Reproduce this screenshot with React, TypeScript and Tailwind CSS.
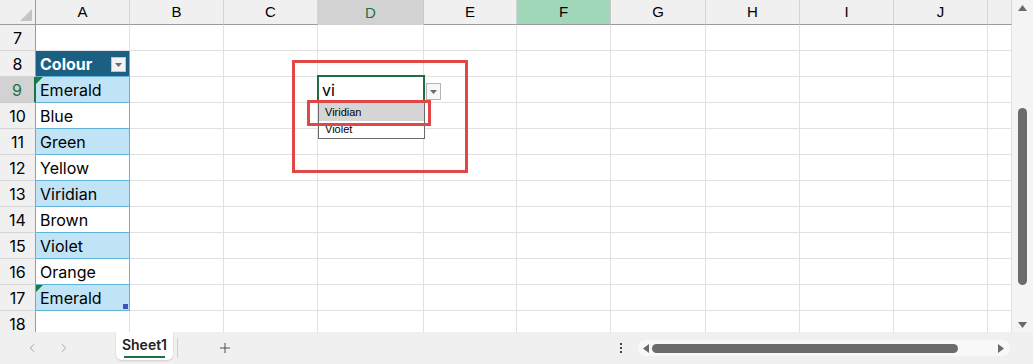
import { ChevronLeft, ChevronRight, Plus } from "lucide-react";

const COLS = ["A", "B", "C", "D", "E", "F", "G", "H", "I", "J", ""];

const ROWS: { n: number; text?: string; kind?: "head" | "band" | "plain"; flag?: boolean; handle?: boolean }[] = [
  { n: 7 },
  { n: 8, text: "Colour", kind: "head" },
  { n: 9, text: "Emerald", kind: "band", flag: true },
  { n: 10, text: "Blue", kind: "plain" },
  { n: 11, text: "Green", kind: "band" },
  { n: 12, text: "Yellow", kind: "plain" },
  { n: 13, text: "Viridian", kind: "band" },
  { n: 14, text: "Brown", kind: "plain" },
  { n: 15, text: "Violet", kind: "band" },
  { n: 16, text: "Orange", kind: "plain" },
  { n: 17, text: "Emerald", kind: "band", flag: true, handle: true },
  { n: 18 },
];

const cellFont = "font-['Inter','Noto_Sans',sans-serif]";

function ColHeader({ label }: { label: string }) {
  if (label === "D") {
    return (
      <div className="flex items-center justify-center bg-[#d2d2d2] border-r border-[#c8c8c8] border-b-2 border-b-[#1e7145] text-[#1e7145] text-[15px] pt-[2px]">
        {label}
      </div>
    );
  }
  if (label === "F") {
    return (
      <div className="flex items-center justify-center bg-[#a0d7b8] border-r border-[#c8c8c8] border-b border-b-[#9b9b9b] text-[15px] pt-[1px]">
        {label}
      </div>
    );
  }
  return (
    <div className="flex items-center justify-center bg-[#f0f0f0] border-r border-[#d4d4d4] border-b border-b-[#9b9b9b] text-[15px] pt-[1px]">
      {label}
    </div>
  );
}

function TableCell({ row }: { row: (typeof ROWS)[number] }) {
  if (!row.kind) {
    return <div className="border-r border-b border-[#e1e1e1] bg-white" />;
  }
  if (row.kind === "head") {
    return (
      <div className="relative flex items-center pl-[4px] bg-[#1b5f82] border-r border-b border-[#5fb2d8] text-white font-bold text-[16px]">
        {row.text}
        <div className="absolute right-[3px] top-[6px] w-[15px] h-[15px] bg-[#f3f3f3] border border-[#c4c4c4] flex items-center justify-center">
          <svg width="7" height="4" viewBox="0 0 7 4">
            <path d="M0 0 L7 0 L3.5 4 Z" fill="#6a6a6a" />
          </svg>
        </div>
      </div>
    );
  }
  return (
    <div
      className={`relative flex items-center pl-[4px] pt-[1px] border-r border-b border-[#5fb2d8] text-black text-[16px] ${
        row.kind === "band" ? "bg-[#c0e4f5]" : "bg-white"
      }`}
    >
      {row.flag && (
        <svg className="absolute left-0 top-0" width="7" height="7" viewBox="0 0 7 7">
          <path d="M0 0 L7 0 L0 7 Z" fill="#1a7f37" />
        </svg>
      )}
      {row.text}
      {row.handle && <div className="absolute right-[1px] bottom-[1px] w-[5px] h-[5px] bg-[#3d55c2]" />}
    </div>
  );
}

function Sheet() {
  return (
    <div className={`relative flex-1 overflow-hidden ${cellFont}`}>
      <div className="grid grid-cols-[36px_94px_94px_94px_106px_93px_94px_95px_94px_94px_94px_24px] grid-rows-[25px_repeat(12,26px)]">
        {/* corner */}
        <div className="relative bg-[#f0f0f0] border-r border-b border-[#9b9b9b]">
          <svg className="absolute right-[3px] bottom-[3px]" width="12" height="12" viewBox="0 0 12 12">
            <path d="M12 0 L12 12 L0 12 Z" fill="#c4c4c4" />
          </svg>
        </div>
        {COLS.map((c, i) => (
          <div key={i} className="font-['Liberation_Sans',Arial,sans-serif] grid">
            <ColHeader label={c} />
          </div>
        ))}

        {ROWS.map((row) => (
          <div key={row.n} className="contents">
            {row.n === 9 ? (
              <div className="flex items-center justify-center bg-[#d2d2d2] border-r-2 border-r-[#1e7145] border-b border-[#c8c8c8] text-[#1e7145] text-[16px] pt-[1px]">
                {row.n}
              </div>
            ) : (
              <div className="flex items-center justify-center bg-[#f0f0f0] border-r border-r-[#9b9b9b] border-b border-[#d4d4d4] text-[16px] pt-[1px]">
                {row.n}
              </div>
            )}
            <TableCell row={row} />
            {COLS.slice(1).map((_, i) => (
              <div key={i} className="border-r border-b border-[#e1e1e1] bg-white" />
            ))}
          </div>
        ))}
      </div>

      {/* active cell D9 with validation dropdown */}
      <div className="absolute left-[317px] top-[75px] w-[108px] h-[28px] border-2 border-[#1e6e42] bg-white flex items-center pl-[3px] pt-[2px] text-[16px] text-black">
        vi
      </div>
      <div className="absolute left-[426px] top-[83px] w-[15px] h-[17px] bg-[#f7f7f7] border border-[#b5b5b5] flex items-center justify-center">
        <svg width="7" height="4" viewBox="0 0 7 4">
          <path d="M0 0 L7 0 L3.5 4 Z" fill="#6a6a6a" />
        </svg>
      </div>
      <div className="absolute left-[318px] top-[102px] w-[107px] h-[37px] bg-white border border-[#6b6b6b] font-['Liberation_Sans',Arial,sans-serif] text-[11px] text-black">
        <div className="h-[18px] bg-[#d6d6d6] flex items-center pl-[6px]">Viridian</div>
        <div className="h-[17px] flex items-center pl-[6px]">Violet</div>
      </div>

      {/* annotation boxes */}
      <div className="absolute left-[292px] top-[60px] w-[176px] h-[113px] border-[3px] border-[#e04848]" />
      <div className="absolute left-[307px] top-[100px] w-[124px] h-[26px] border-[3px] border-[#e04848]" />
    </div>
  );
}

function VScroll() {
  return (
    <div className="w-[21px] bg-[#f4f4f4] flex flex-col items-center">
      <svg className="mt-[5px]" width="9" height="6" viewBox="0 0 9 6">
        <path d="M4.5 0 L9 6 L0 6 Z" fill="#6a6a6a" />
      </svg>
      <div className="mt-[97px] w-[9px] h-[177px] rounded-full bg-[#6b6b6b]" />
      <svg className="mt-[37px]" width="9" height="6" viewBox="0 0 9 6">
        <path d="M0 0 L9 0 L4.5 6 Z" fill="#6a6a6a" />
      </svg>
    </div>
  );
}

function TabBar() {
  return (
    <div className="h-[32px] bg-[#f0f0f0] flex items-center font-['Inter','Noto_Sans',sans-serif]">
      <div className="w-[116px] flex items-center pl-[25px] gap-[18px] text-[#9a9a9a]">
        <ChevronLeft size={14} strokeWidth={1.5} />
        <ChevronRight size={14} strokeWidth={1.5} />
      </div>
      <div className="self-start w-[57px] h-[28px] bg-white rounded-b-[6px] shadow-[0_1px_2px_rgba(0,0,0,0.15)] flex flex-col items-center justify-center">
        <span className="text-[14px] font-semibold text-[#222] leading-[16px] mt-[3px]">Sheet1</span>
        <div className="mt-[3px] w-[41px] h-[2px] bg-[#1e7145]" />
      </div>
      <div className="ml-[4px] w-px h-[20px] bg-[#d0d0d0]" />
      <Plus className="ml-[39px] text-[#333]" size={16} strokeWidth={1.25} />
      <div className="ml-[387px] flex flex-col gap-[2px]">
        <div className="w-[2px] h-[2px] bg-[#444]" />
        <div className="w-[2px] h-[2px] bg-[#444]" />
        <div className="w-[2px] h-[2px] bg-[#444]" />
      </div>
      <div className="ml-[16px] w-[372px] h-[16px] rounded-full bg-[#f8f8f8] flex items-center pl-[5px]">
        <svg width="6" height="9" viewBox="0 0 6 9">
          <path d="M0 4.5 L6 0 L6 9 Z" fill="#6a6a6a" />
        </svg>
        <div className="ml-[3px] w-[306px] h-[9px] rounded-full bg-[#6b6b6b]" />
        <svg className="ml-[40px]" width="6" height="9" viewBox="0 0 6 9">
          <path d="M0 0 L6 4.5 L0 9 Z" fill="#6a6a6a" />
        </svg>
      </div>
    </div>
  );
}

export default function App() {
  return (
    <div className="w-[1033px] h-[364px] flex flex-col bg-white overflow-hidden">
      <div className="h-[332px] flex overflow-hidden">
        <Sheet />
        <VScroll />
      </div>
      <TabBar />
    </div>
  );
}
